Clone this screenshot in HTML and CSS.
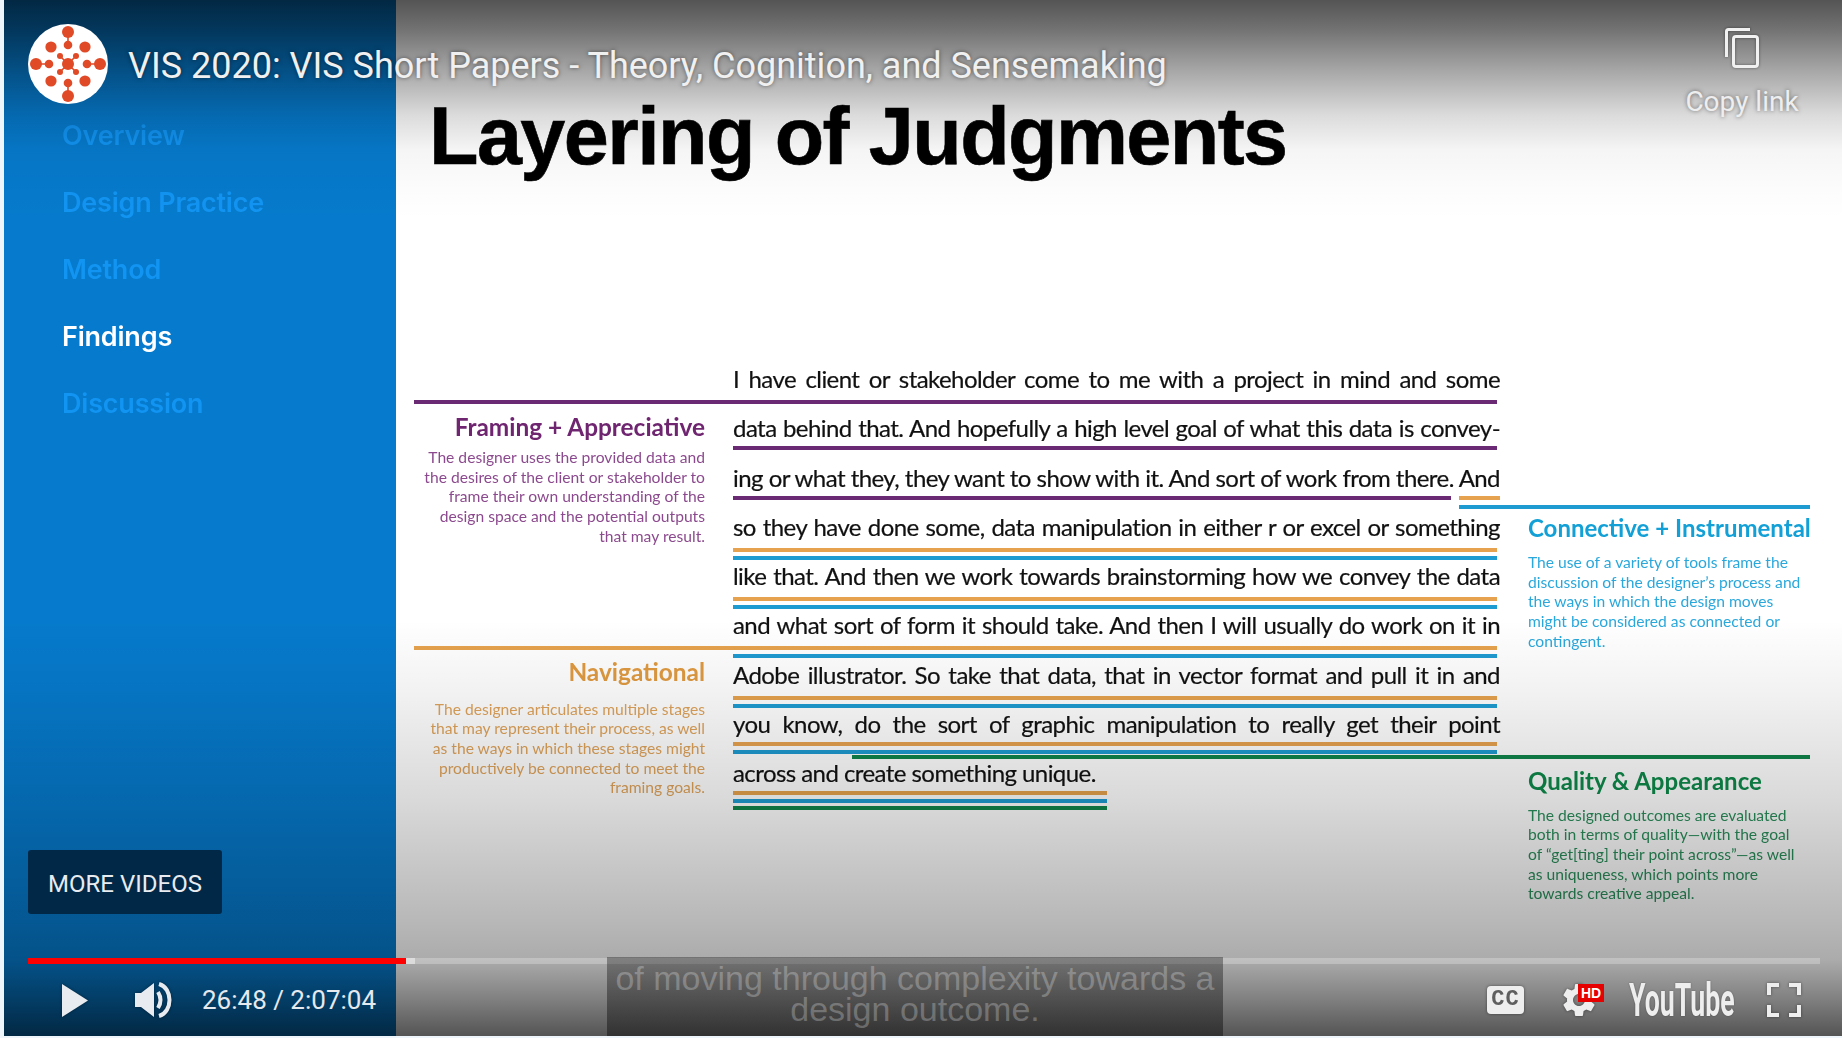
FILE: index.html
```html
<!DOCTYPE html>
<html lang="en">
	<head>
		<meta charset="utf-8">
		<title>VIS 2020: VIS Short Papers - Theory, Cognition, and Sensemaking</title>
		<link rel="stylesheet" href="styles.css">
	</head>
	<body>
		<div class="player">

			<!-- the video frame -->
			<div class="sidebar">
				<ul class="nav">
					<li>Overview</li>
					<li>Design Practice</li>
					<li>Method</li>
					<li class="current">Findings</li>
					<li>Discussion</li>
				</ul>
			</div>

			<div class="slide">
				<h1 class="slide-title">Layering of Judgments</h1>
				<div class="slide-body">

					<div class="side side-left">
						<div class="note note-framing">
							<h2>Framing + Appreciative</h2>
							<p>The designer uses the provided data and<br>the desires of the client or stakeholder to<br>frame their own understanding of the<br>design space and the potential outputs<br>that may result.</p>
						</div>
						<div class="note note-nav">
							<h2>Navigational</h2>
							<p>The designer articulates multiple stages<br>that may represent their process, as well<br>as the ways in which these stages might<br>productively be connected to meet the<br>framing goals.</p>
						</div>
					</div>

					<div class="transcript">
						<div class="line">
							<p>I have client or stakeholder come to me with a project in mind and some</p>
							<div class="rules">
								<i class="rule purple to-left"></i>
							</div>
						</div>
						<div class="line">
							<p>data behind that. And hopefully a high level goal of what this data is convey-</p>
							<div class="rules tight">
								<i class="rule purple"></i>
							</div>
						</div>
						<div class="line">
							<p>ing or what they, they want to show with it. And sort of work from there. And</p>
							<div class="rules tight">
								<div class="rule-split">
									<i class="rule purple"></i>
									<i class="rule orange"></i>
								</div>
								<i class="rule blue connective"></i>
							</div>
						</div>
						<div class="line">
							<p>so they have done some, data manipulation in either r or excel or something</p>
							<div class="rules">
								<i class="rule orange"></i>
								<i class="rule blue"></i>
							</div>
						</div>
						<div class="line">
							<p>like that. And then we work towards brainstorming how we convey the data</p>
							<div class="rules">
								<i class="rule orange"></i>
								<i class="rule blue"></i>
							</div>
						</div>
						<div class="line">
							<p>and what sort of form it should take. And then I will usually do work on it in</p>
							<div class="rules">
								<i class="rule orange to-left"></i>
								<i class="rule blue"></i>
							</div>
						</div>
						<div class="line">
							<p>Adobe illustrator. So take that data, that in vector format and pull it in and</p>
							<div class="rules">
								<i class="rule orange"></i>
								<i class="rule blue"></i>
							</div>
						</div>
						<div class="line">
							<p>you know, do the sort of graphic manipulation to really get their point</p>
							<div class="rules tight">
								<i class="rule orange"></i>
								<i class="rule blue"></i>
								<i class="rule green quality"></i>
							</div>
						</div>
						<div class="line last">
							<p>across and create something unique.</p>
							<div class="rules tight">
								<i class="rule orange"></i>
								<i class="rule blue"></i>
								<i class="rule green"></i>
							</div>
						</div>
					</div>

					<div class="side side-right">
						<div class="note note-connective">
							<h2>Connective + Instrumental</h2>
							<p>The use of a variety of tools frame the<br>discussion of the designer’s process and<br>the ways in which the design moves<br>might be considered as connected or<br>contingent.</p>
						</div>
						<div class="note note-quality">
							<h2>Quality &amp; Appearance</h2>
							<p>The designed outcomes are evaluated<br>both in terms of quality—with the goal<br>of “get[ting] their point across”—as well<br>as uniqueness, which points more<br>towards creative appeal.</p>
						</div>
					</div>

				</div>
			</div>

			<!-- youtube chrome on top of the frame -->
			<div class="shade-top"></div>
			<div class="shade-bottom"></div>

			<div class="titlebar">
				<svg class="logo" viewBox="-40 -40 80 80">
					<circle r="40" fill="#fff"/>
					<g stroke="#e04a27" stroke-width="1.6">
						<path d="M0 -32V-19M0 32V19M-32 0H-19M32 0H19M-8 -8L8 8M8 -8L-8 8"/>
					</g>
					<g fill="#e04a27">
						<circle r="6"/>
						<circle cx="0" cy="-32" r="6"/>
						<circle cx="0" cy="32" r="6"/>
						<circle cx="-32" cy="0" r="6"/>
						<circle cx="32" cy="0" r="6"/>
						<circle cx="0" cy="-19" r="4.3"/>
						<circle cx="0" cy="19" r="4.3"/>
						<circle cx="-19" cy="0" r="4.3"/>
						<circle cx="19" cy="0" r="4.3"/>
						<circle cx="-17" cy="-17" r="5.6"/>
						<circle cx="17" cy="-17" r="5.6"/>
						<circle cx="-17" cy="17" r="5.6"/>
						<circle cx="17" cy="17" r="5.6"/>
						<circle cx="-8" cy="-8" r="3"/>
						<circle cx="8" cy="-8" r="3"/>
						<circle cx="-8" cy="8" r="3"/>
						<circle cx="8" cy="8" r="3"/>
					</g>
				</svg>
				<div class="video-title">VIS 2020: VIS Short Papers - Theory, Cognition, and Sensemaking</div>
			</div>

			<div class="copy-link">
				<svg class="icon copy-icon" viewBox="0 0 34 40" fill="none" stroke="#f1f1f1" stroke-width="3">
					<path d="M1.5 29V3.5Q1.5 1.5 3.5 1.5H25"/>
					<rect x="8.5" y="8.5" width="24" height="30" rx="2.5"/>
				</svg>
				<span>Copy link</span>
			</div>

			<div class="more-videos">MORE VIDEOS</div>

			<div class="progress">
				<div class="played"></div>
				<div class="buffered"></div>
			</div>

			<div class="controls">
				<svg class="icon play" viewBox="0 0 26 33">
					<path d="M0 0L26 16.5L0 33Z" fill="#e8ecf1"/>
				</svg>
				<svg class="icon volume" viewBox="0 0 37 36">
					<path d="M0 11H6L19 1V35L6 25H0Z" fill="#e8ecf1"/>
					<path d="M23 10Q28 18 23 26M24 2C38 6 38 30 24 34" fill="none" stroke="#e8ecf1" stroke-width="4"/>
				</svg>
				<div class="time">26:48 / 2:07:04</div>
				<div class="controls-right">
					<div class="cc">CC</div>
					<div class="settings">
						<svg class="icon gear" viewBox="0 0 24 24">
							<path fill="#eee" d="M19.14 12.94c.04-.3.06-.61.06-.94 0-.32-.02-.64-.07-.94l2.03-1.58c.18-.14.23-.41.12-.61l-1.92-3.32c-.12-.22-.37-.29-.59-.22l-2.39.96c-.5-.38-1.03-.7-1.62-.94l-.36-2.54c-.04-.24-.24-.41-.48-.41h-3.84c-.24 0-.43.17-.47.41l-.36 2.54c-.59.24-1.13.57-1.62.94l-2.39-.96c-.22-.08-.47 0-.59.22L2.74 8.87c-.12.21-.08.47.12.61l2.03 1.58c-.05.3-.09.63-.09.94s.02.64.07.94l-2.03 1.58c-.18.14-.23.41-.12.61l1.92 3.32c.12.22.37.29.59.22l2.39-.96c.5.38 1.03.7 1.62.94l.36 2.54c.05.24.24.41.48.41h3.84c.24 0 .44-.17.47-.41l.36-2.54c.59-.24 1.13-.56 1.62-.94l2.39.96c.22.08.47 0 .59-.22l1.92-3.32c.12-.22.07-.47-.12-.61l-2.01-1.58zM12 15.6c-1.98 0-3.6-1.62-3.6-3.6s1.62-3.6 3.6-3.6 3.6 1.62 3.6 3.6-1.62 3.6-3.6 3.6z"/>
						</svg>
						<span class="hd">HD</span>
					</div>
					<div class="yt"><span class="yt-text">YouTube</span></div>
					<svg class="icon fullscreen" viewBox="0 0 34 34" fill="none" stroke="#eee" stroke-width="4">
						<path d="M2 12V2H12M22 2H32V12M32 22V32H22M12 32H2V22"/>
					</svg>
				</div>
			</div>

			<div class="caption">of moving through complexity towards a<br>design outcome.</div>
		</div>
	</body>
</html>
```

FILE: styles.css
```css
body {
	margin: 0;
	height: 1038px;
	overflow: hidden;
	background: #eef5fb;
	font-family: "Liberation Sans", sans-serif;
}

.player {
	position: relative;
	display: flex;
	margin-left: 4px;
	width: 1838px;
	height: 1036px;
	overflow: hidden;
}

/* slide: left panel */
.sidebar {
	width: 392px;
	flex: none;
	background: #067acc;
}

.nav {
	list-style: none;
	margin: 0;
	padding: 102px 0 0 58px;
	font-family: "Inter", sans-serif;
	font-size: 27px;
	font-weight: 600;
	letter-spacing: -0.2px;
	line-height: 67px;
	color: #1294f2;
	filter: blur(0.5px);
}

.nav .current {
	color: #fff;
}

/* slide: content */
.slide {
	flex: 1;
	padding: 96px 0 0 18px;
	background: #fff;
	filter: blur(0.45px);
	color: #111;
}

.slide-title {
	margin: 0 0 185px 15px;
	font-size: 81px;
	line-height: 81px;
	font-weight: bold;
	letter-spacing: -1.6px;
	-webkit-text-stroke: 0.6px #000;
	color: #000;
	white-space: nowrap;
}

.slide-body {
	display: grid;
	grid-template-columns: 291px 767px 282px;
	column-gap: 28px;
}

.line {
	height: 49.3px;
}

.line p {
	margin: 0;
	font-family: "Lato", sans-serif;
	font-size: 24px;
	letter-spacing: -0.56px;
	line-height: 34px;
	text-align: justify;
	text-align-last: justify;
	-webkit-text-stroke: 0.2px #111;
}

.line.last p {
	text-align-last: left;
}

.rules {
	display: flex;
	flex-direction: column;
	gap: 4px;
	margin: 4px 3px 0 0;
}

.rules.tight {
	margin-top: 1px;
}

.rule {
	display: block;
	height: 4px;
	flex: none;
}

.rule-split {
	display: flex;
	gap: 8px;
	margin-right: -3px;
}

.rule-split .purple {
	flex: 1;
}

.rule-split .orange {
	width: 41px;
}

.purple { background: #6b2a74; }
.orange { background: #e6a24e; }
.blue { background: #1e9bd1; }
.green { background: #10854a; }

.to-left {
	margin-left: -319px;
}

.connective {
	margin-left: 726px;
	margin-right: -313px;
	margin-top: 1px;
}

.quality {
	margin-left: 119px;
	margin-right: -313px;
	margin-top: -3px;
}

.line.last .rule {
	width: 374px;
}

.line.last .green {
	margin-top: -1px;
}

/* side notes */
.note h2 {
	margin: 0;
	font-family: "Lato", sans-serif;
	font-size: 24px;
	line-height: 28px;
	font-weight: bold;
	white-space: nowrap;
}

.note p {
	margin: 0;
	font-family: "Lato", sans-serif;
	font-size: 15.65px;
	line-height: 19.7px;
	white-space: nowrap;
}

.side-left {
	text-align: right;
}

.side-left .note h2 {
	font-size: 24.4px;
}

.note-framing { margin-top: 51px; color: #6f2570; }
.note-framing p { margin-top: 7px; color: #8c4a8e; }

.note-nav { margin-top: 111px; color: #e09a40; }
.note-nav p { margin-top: 14px; color: #dfa35a; }

.note-connective { margin-top: 152px; color: #12a0d6; }
.note-connective p { margin-top: 11px; color: #2aa8dc; }

.note-quality { margin-top: 115px; color: #0e8a4a; }
.note-quality p { margin-top: 11px; color: #2b8f5c; }

/* player chrome */
.shade-top,
.shade-bottom {
	position: absolute;
	left: 0;
	right: 0;
}

.shade-top {
	top: 0;
	height: 220px;
	background: linear-gradient(to bottom, rgba(0,0,0,.67) 0, rgba(0,0,0,.55) 30px, rgba(0,0,0,.35) 70px, rgba(0,0,0,.14) 115px, rgba(0,0,0,.04) 150px, rgba(0,0,0,.01) 190px, rgba(0,0,0,0) 220px);
}

.shade-bottom {
	top: 620px;
	bottom: 0;
	background: linear-gradient(to bottom, rgba(0,0,0,0) 0, rgba(0,0,0,.05) 70px, rgba(0,0,0,.15) 180px, rgba(0,0,0,.28) 300px, rgba(0,0,0,.33) 340px, rgba(0,0,0,.5) 380px, rgba(0,0,0,.67) 416px);
}

.titlebar {
	position: absolute;
	top: 24px;
	left: 24px;
	display: flex;
	align-items: center;
	gap: 20px;
}

.logo {
	width: 80px;
	height: 80px;
	flex: none;
}

.video-title {
	margin-top: 4px;
	font-family: "Roboto", sans-serif;
	font-size: 36px;
	color: #f0f0f0;
	white-space: nowrap;
	text-shadow: 0 0 4px rgba(0,0,0,.5);
}

.copy-link {
	position: absolute;
	top: 28px;
	right: 38px;
	width: 124px;
	display: flex;
	flex-direction: column;
	align-items: center;
	gap: 18px;
	font-family: "Roboto", sans-serif;
	font-size: 28px;
	line-height: 32px;
	color: #eee;
	text-shadow: 0 0 4px rgba(0,0,0,.5);
}

.icon {
	display: block;
	flex: none;
	filter: drop-shadow(0 0 1.5px rgba(0,0,0,.45));
}

.copy-icon {
	width: 34px;
	height: 40px;
}

.more-videos {
	position: absolute;
	left: 24px;
	top: 850px;
	width: 194px;
	height: 64px;
	padding-top: 4px;
	box-sizing: border-box;
	display: flex;
	align-items: center;
	justify-content: center;
	border-radius: 3px;
	background: #012846;
	font-family: "Roboto", sans-serif;
	font-size: 24px;
	color: #e8ecf1;
}

.progress {
	position: absolute;
	left: 24px;
	top: 958px;
	width: 1792px;
	height: 6px;
	display: flex;
	background: rgba(255,255,255,.25);
}

.played {
	width: 378px;
	background: #f00;
}

.buffered {
	width: 9px;
	background: rgba(255,255,255,.45);
}

.controls {
	position: absolute;
	left: 58px;
	right: 41px;
	top: 980px;
	height: 40px;
	display: flex;
	align-items: center;
}

.play {
	width: 26px;
	height: 33px;
}

.volume {
	width: 37px;
	height: 36px;
	margin-left: 47px;
}

.time {
	margin-left: 30px;
	font-family: "Roboto", sans-serif;
	font-size: 26px;
	color: #e6e9ee;
	white-space: nowrap;
}

.controls-right {
	margin-left: auto;
	display: flex;
	align-items: center;
}

.cc {
	width: 37px;
	height: 28px;
	border-radius: 4px;
	background: #eee;
	color: #5f5f5f;
	font-family: "Liberation Mono", monospace;
	font-size: 22px;
	font-weight: bold;
	letter-spacing: 1px;
	line-height: 28px;
	text-align: center;
	filter: drop-shadow(0 0 1.5px rgba(0,0,0,.45));
}

.settings {
	position: relative;
	width: 45px;
	height: 40px;
	margin-left: 35px;
}

.gear {
	width: 40px;
	height: 40px;
}

.hd {
	position: absolute;
	top: 4px;
	right: 0;
	width: 26px;
	height: 18px;
	background: #e60000;
	color: #fff;
	font-size: 14px;
	font-weight: bold;
	line-height: 18px;
	text-align: center;
}

.yt {
	width: 105px;
	height: 40px;
	margin-left: 25px;
}

.yt-text {
	display: block;
	width: max-content;
	font-family: "Roboto", sans-serif;
	font-size: 46px;
	font-weight: bold;
	line-height: 40px;
	color: #eee;
	transform: scaleX(0.58);
	transform-origin: left center;
	text-shadow: 0 0 2px rgba(0,0,0,.45);
}

.fullscreen {
	width: 34px;
	height: 34px;
	margin-left: 33px;
}

.caption {
	position: absolute;
	left: 603px;
	top: 957px;
	width: 616px;
	height: 79px;
	padding-top: 6px;
	box-sizing: border-box;
	background: linear-gradient(to bottom, rgba(8,8,8,.35), rgba(8,8,8,.45));
	font-size: 34px;
	line-height: 31px;
	text-align: center;
	color: rgba(255,255,255,.26);
	white-space: nowrap;
}
```
